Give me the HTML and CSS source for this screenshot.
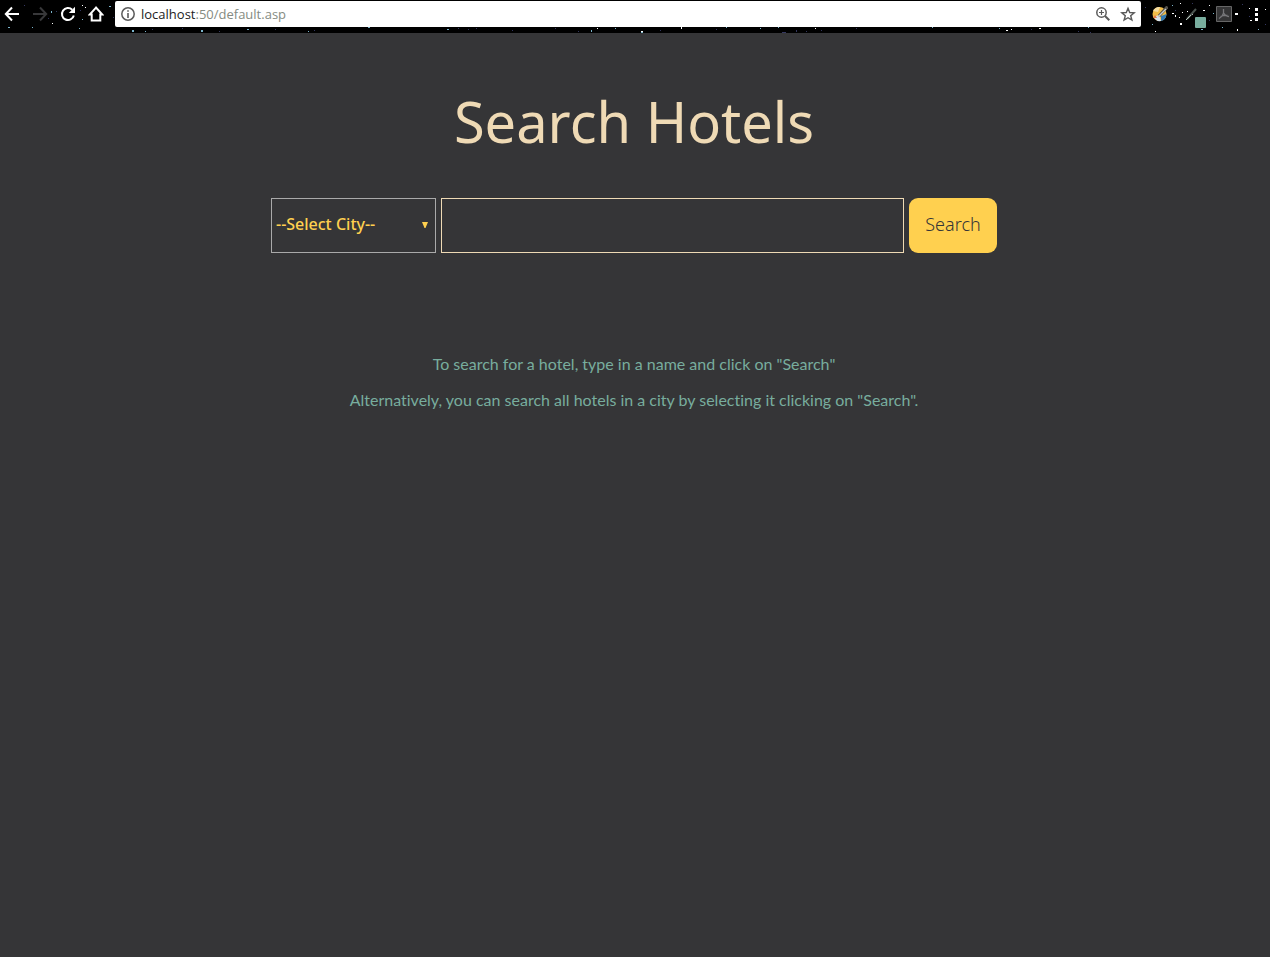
FILE: index.html
```html
<!DOCTYPE html>
<html lang="en">
<head>
<meta charset="utf-8">
<title>Search Hotels</title>
<link rel="stylesheet" href="styles.css">
</head>
<body>
<header class="toolbar">
  <svg class="stars" width="1270" height="33" viewBox="0 0 1270 33" shape-rendering="crispEdges" aria-hidden="true">
    <path fill="#fff" d="M52 23h1v1h-1zM85 7h1v1h-1zM82 5h1v1h-1zM597 28h1v1h-1zM641 31h2v1h-2zM681 27h1v2h-1zM815 28h1v1h-1zM1006 30h2v1h-2zM1011 29h1v1h-1zM1039 28h2v1h-2zM1172 13h2v1h-2zM1175 15h1v2h-1zM1180 23h2v2h-2zM1182 12h1v1h-1zM1191 14h2v1h-2zM1188 17h1v1h-1zM1180 3h1v1h-1zM1209 5h1v1h-1zM1203 10h2v1h-2zM1235 13h3v2h-3zM1237 29h1v2h-1zM1250 20h2v1h-2zM1265 9h1v1h-1zM1155 31h1v1h-1zM1179 17h1v1h-1zM1187 11h1v1h-1zM1249 8h1v1h-1z"/>
    <path fill="#7bb5cc" d="M8 27h2v1H8zM32 27h1v1h-1zM51 11h1v2h-1zM82 19h1v1h-1zM79 28h1v1h-1zM109 6h2v1h-2zM132 30h2v2h-2zM145 31h1v1h-1zM201 30h2v2h-2zM247 29h2v1h-2zM308 31h1v1h-1zM368 27h2v1h-2zM447 29h2v1h-2zM591 30h1v2h-1zM615 28h1v1h-1zM641 32h2v1h-2zM726 27h1v1h-1zM760 28h1v1h-1zM778 27h1v1h-1zM932 27h1v1h-1zM999 28h1v1h-1zM1088 27h1v1h-1zM1152 24h1v1h-1zM1172 5h1v1h-1zM1201 29h2v1h-2zM1213 13h1v1h-1zM1222 27h1v1h-1zM1258 29h1v1h-1z"/>
    <path fill="#34375f" d="M24 5h1v1h-1zM48 18h1v1h-1zM56 11h1v1h-1zM80 10h1v1h-1zM113 17h1v1h-1zM152 29h1v1h-1zM182 28h1v1h-1zM219 31h1v1h-1zM275 29h1v1h-1zM314 30h1v1h-1zM458 28h1v1h-1zM468 29h1v1h-1zM476 28h1v1h-1zM512 30h1v1h-1zM555 28h1v1h-1zM578 31h1v1h-1zM660 30h1v1h-1zM716 29h1v1h-1zM782 32h4v1h-4zM796 30h1v2h-1zM806 31h1v1h-1zM821 30h1v1h-1zM856 28h1v1h-1zM1031 29h1v1h-1zM1078 31h1v1h-1zM1090 32h1v1h-1zM1145 7h1v1h-1zM1175 10h1v1h-1zM1192 3h1v1h-1zM1209 20h1v1h-1zM1242 4h1v1h-1zM1249 16h1v1h-1zM1265 24h1v1h-1z"/>
  </svg>
  <nav class="nav-buttons" aria-label="Browser">
    <button class="icon-button" type="button" aria-label="Back"><svg width="16" height="16" viewBox="0 0 16 16"><path d="M15 8H2M8 1.5 1.8 8 8 14.5" fill="none" stroke="#fff" stroke-width="2"/></svg></button>
    <button class="icon-button" type="button" aria-label="Forward"><svg width="16" height="16" viewBox="0 0 16 16"><path d="M1 8h13M8 1.5 14.2 8 8 14.5" fill="none" stroke="#38383a" stroke-width="2"/></svg></button>
    <button class="icon-button" type="button" aria-label="Reload"><svg width="16" height="16" viewBox="0 0 16 16"><path d="M13.8 9.5A6 6 0 1 1 12.2 3.8" fill="none" stroke="#fff" stroke-width="2"/><path d="M15 .8V7H8.800z" fill="#fff"/></svg></button>
    <button class="icon-button" type="button" aria-label="Home"><svg width="16" height="16" viewBox="0 0 16 16"><path d="M8 1.600 1.700 8.500H3.700V14.500H12.300V8.500H14.300z" fill="none" stroke="#fff" stroke-width="2"/></svg></button>
  </nav>
  <div class="address">
    <svg width="14" height="14" viewBox="0 0 14 14" aria-hidden="true"><circle cx="7" cy="7" r="6.200" fill="none" stroke="#5a5a5a" stroke-width="1.500"/><path d="M6.200 3.200h1.600v1.600H6.200zM6.200 6h1.600v5H6.200z" fill="#5a5a5a"/></svg>
    <div class="url"><span class="host">localhost</span>:50/default.asp</div>
    <button class="icon-button" type="button" aria-label="Zoom"><svg width="16" height="16" viewBox="0 0 16 16"><circle cx="6.500" cy="6.500" r="4.700" fill="none" stroke="#5a5a5a" stroke-width="1.500"/><path d="M10 10 14.300 14.300" stroke="#5a5a5a" stroke-width="2"/><path d="M4 6.500h5M6.500 4v5" stroke="#5a5a5a" stroke-width="1.200"/></svg></button>
    <button class="icon-button" type="button" aria-label="Bookmark"><svg width="16" height="16" viewBox="0 0 16 16"><path d="M8 2.300 9.700 6.500 14.200 6.800 10.700 9.700 11.900 14.100 8 11.700 4.100 14.100 5.300 9.700 1.800 6.800 6.300 6.500z" fill="none" stroke="#5a5a5a" stroke-width="1.400"/></svg></button>
  </div>
  <div class="extensions">
    <button class="icon-button" type="button" aria-label="Color picker"><svg width="16" height="16" viewBox="0 0 16 16"><circle cx="7.500" cy="8" r="7" fill="#f2bd48"/><path d="M1 5A7 7 0 0 1 8 1L6 6z" fill="#f4dca0"/><path d="M2 11 7 9 9 15Q4 16 2 11z" fill="#d8e4ee"/><path d="M9 10 14.500 8Q14 14 9 15z" fill="#3279b4"/><path d="M3 9 1 12l4 0z" fill="#df764d"/><path d="M15.500 .5 7 10" stroke="#53504a" stroke-width="3"/><path d="M14 3 6 11" stroke="#c9ceca" stroke-width="1.500"/></svg></button>
    <button class="icon-button dropper" type="button" aria-label="Eyedropper"><svg width="22" height="22" viewBox="0 0 22 22"><path d="M3 13 12 3" stroke="#4c5551" stroke-width="2"/><path d="M2 14 7 9" stroke="#b8c5bb"/><rect x="11" y="11" width="11" height="11" rx="1" fill="#78ad9e"/></svg></button>
    <button class="icon-button" type="button" aria-label="PDF tools"><svg width="16" height="16" viewBox="0 0 16 16"><path d="M.5.5h15v15H.5z" fill="#353536" stroke="#666"/><path d="M7.500 3v4Q7 10 3 12.500M7.500 7Q9 10 13 10.500M4.500 10.500Q8 9 11.500 9.500" fill="none" stroke="#77777a" stroke-width="1.300"/></svg></button>
    <button class="icon-button menu-button" type="button" aria-label="Menu"><svg width="4" height="16" viewBox="0 0 4 16"><path d="M1 2h3v3h-3zM1 7h3v3h-3zM1 12h3v3h-3z" fill="#fff"/></svg></button>
  </div>
</header>
<main class="page">
  <h1 class="title">Search Hotels</h1>
  <form class="search">
    <div class="city">
      <select class="city-select" aria-label="City"><option>--Select City--</option></select>
      <svg class="city-arrow" width="6" height="6" viewBox="0 0 6 6" aria-hidden="true"><path d="M0 0h6L3.500 6h-1z" fill="#ffd04f"/></svg>
    </div>
    <input class="hotel-name" type="text" aria-label="Hotel name">
    <button class="submit" type="submit">Search</button>
  </form>
  <div class="help">
    <p>To search for a hotel, type in a name and click on "Search"</p>
    <p>Alternatively, you can search all hotels in a city by selecting it clicking on "Search".</p>
  </div>
</main>
</body>
</html>
```

FILE: styles.css
```css
* { box-sizing: border-box; }

body {
  margin: 0;
  background: #353537;
  font-family: Lato, sans-serif;
}

.toolbar {
  position: relative;
  display: flex;
  align-items: flex-start;
  height: 33px;
  padding: 1px 12px 0 4px;
  overflow: hidden;
  background: #000;
}

.stars {
  position: absolute;
  top: 0;
  left: 0;
}

.icon-button {
  display: flex;
  padding: 0;
  border: 0;
  background: none;
}

.nav-buttons,
.address,
.extensions {
  position: relative;
  display: flex;
  align-items: center;
  height: 26px;
}

.nav-buttons { gap: 12px; }

.address {
  flex: 1;
  gap: 6px;
  margin: 0 11px;
  padding: 0 5px 0 6px;
  border-radius: 2px;
  background: #fff;
}

.address .icon-button + .icon-button { margin-left: 3px; }

.url {
  flex: 1;
  color: #858b82;
  font: 13px/20px "Open Sans", sans-serif;
}

.host { color: #222; }

.extensions {
  align-items: flex-start;
  padding-top: 5px;
  gap: 10px;
}

.dropper { margin-left: 6px; }

.menu-button { margin-left: 12px; }

.page {
  padding: 50px 16px 32px 14px;
  text-align: center;
}

.title {
  margin: 0;
  color: #efdab5;
  font: 400 56px/76px "Noto Sans", sans-serif;
}

.search {
  display: flex;
  gap: 5px;
  max-width: 726px;
  height: 55px;
  margin: 39px auto 0;
}

.city {
  position: relative;
  flex: 0 0 165px;
}

.city-select {
  width: 100%;
  height: 100%;
  padding: 0 24px 4px 4px;
  border: 1px solid #aaa;
  border-radius: 0;
  appearance: none;
  background: transparent;
  color: #ffd04f;
  font: 500 16px "Noto Sans", sans-serif;
}

.city-arrow {
  position: absolute;
  top: 24px;
  right: 8px;
  pointer-events: none;
}

.hotel-name {
  flex: 1;
  min-width: 0;
  padding: 0 12px;
  border: 1px solid #efdab5;
  background: transparent;
  color: #efdab5;
  font: 18px "Noto Sans", sans-serif;
}

.submit {
  flex: 0 0 88px;
  padding: 0 0 4px;
  border: 0;
  border-radius: 9px;
  background: #ffd04f;
  color: #353537;
  font: 300 18px "Noto Sans", sans-serif;
}

.help {
  margin-top: 93px;
  color: #78ad9e;
  font-size: 16px;
  line-height: 36px;
  font-variant-ligatures: none;
}

.help p { margin: 0; }
```
